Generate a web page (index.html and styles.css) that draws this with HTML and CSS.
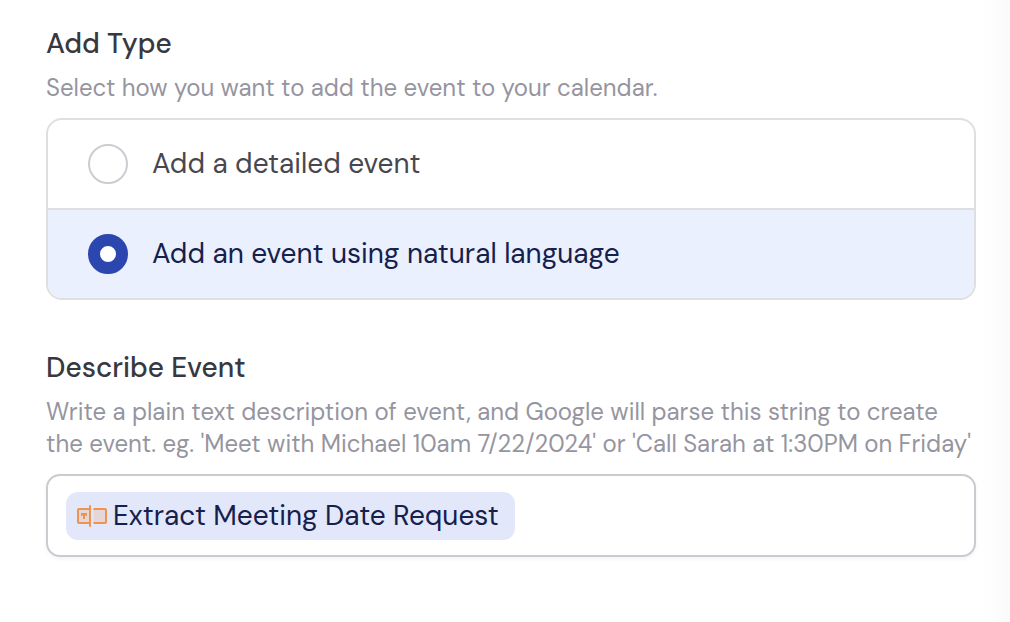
FILE: index.html
```html
<!DOCTYPE html>
<html lang="en">
<head>
<meta charset="utf-8">
<meta name="viewport" content="width=device-width, initial-scale=1">
<title>Add event</title>
<link rel="stylesheet" href="styles.css">
</head>
<body>
<form class="form">
  <fieldset class="field" aria-describedby="type-help">
    <legend class="field-title">Add Type</legend>
    <p class="help" id="type-help">Select how you want to add the event to your calendar.</p>
    <div class="options">
      <label class="option">
        <input class="radio" type="radio" name="type" value="detailed">
        <span>Add a detailed event</span>
      </label>
      <label class="option">
        <input class="radio" type="radio" name="type" value="natural" checked>
        <span>Add an event using natural language</span>
      </label>
    </div>
  </fieldset>
  <div class="field">
    <label class="field-title" for="describe">Describe Event</label>
    <p class="help" id="describe-help">Write a plain text description of event, and Google will parse this string to create<br>the event. eg. 'Meet with Michael 10am 7/22/2024' or 'Call Sarah at 1:30PM on Friday'</p>
    <div class="token-box">
      <span class="token">
        <svg class="token-icon" viewBox="0 0 30 22" fill="none" stroke="#ef9350" stroke-width="2" aria-hidden="true">
          <path d="M16.500 4H28a1 1 0 0 1 1 1v12a1 1 0 0 1-1 1H16.500" fill="#e5d6d8"/>
          <path d="M13 4H2a1 1 0 0 0-1 1v12a1 1 0 0 0 1 1h11" fill="#e5d6d8"/>
          <path d="M13 1v20" stroke-linecap="round"/>
          <path d="M4 8h6v3H8.500v-1H8v4H6v-4h-.5v1H4z" fill="#ef9350" stroke="none"/>
        </svg>
        <span>Extract Meeting Date Request</span>
      </span>
      <input class="token-input" id="describe" type="text" aria-describedby="describe-help">
    </div>
  </div>
</form>
</body>
</html>
```
FILE: styles.css
```css
* {
  box-sizing: border-box;
}

body {
  margin: 0;
  min-height: 100vh;
  background: linear-gradient(to left, #fafafa, #fefefe 20px, #fff 34px);
  color: #38383f;
  font-family: "DM Sans", Roboto, sans-serif;
  font-size: 28px;
  line-height: 36px;
}

.form {
  display: flex;
  flex-direction: column;
  gap: 50px;
  padding: 26px 34px 64px 46px;
}

.field {
  min-width: 0;
  margin: 0;
  padding: 0;
  border: 0;
}

.field-title {
  display: block;
  padding: 0;
  font-weight: 500;
}

.help {
  margin: 10px 0 14px;
  color: #96959f;
  font-size: 24px;
  line-height: 32px;
}

.options {
  overflow: hidden;
  border: 2px solid #dfdfe1;
  border-radius: 16px;
  background: #fff;
}

.option {
  display: flex;
  align-items: center;
  gap: 24px;
  min-height: 88px;
  padding: 0 40px;
  color: #48474f;
}

.option + .option {
  min-height: 90px;
  border-top: 2px solid #dfdfe1;
}

.option:has(:checked) {
  background: #eaf0fd;
  color: #15204c;
}

.radio {
  flex: none;
  width: 40px;
  height: 40px;
  margin: 0;
  border: 2px solid #cdccd2;
  border-radius: 50%;
  background: #fff;
  appearance: none;
}

.radio:checked {
  border: 12px solid #2c46b0;
}

.token-box {
  display: flex;
  align-items: center;
  padding: 16px 18px 15px;
  border: 2px solid #cbcad0;
  border-radius: 14px;
  background: #fff;
  box-shadow: 0 2px 4px rgb(0 0 0 / 5%);
}

.token {
  display: flex;
  flex: none;
  align-items: center;
  gap: 6px;
  height: 48px;
  padding: 0 16px 0 11px;
  border-radius: 12px;
  background: #e2e7fa;
  color: #15204c;
}

.token-icon {
  width: 30px;
  height: 22px;
}

.token-input {
  flex: 1;
  min-width: 0;
  border: 0;
  outline: 0;
  background: transparent;
  color: inherit;
  font: inherit;
}
```
